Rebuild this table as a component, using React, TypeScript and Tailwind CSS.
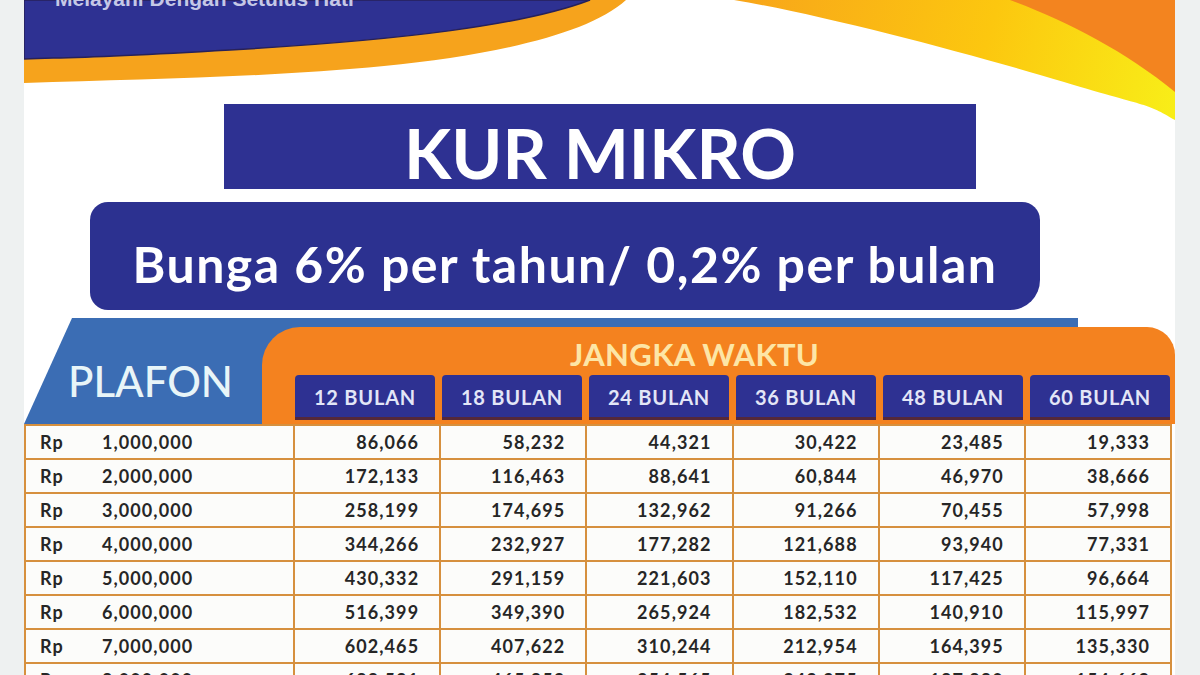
// KUR Mikro brochure: banner swoosh, title blocks, and the instalment table.

const terms = ['12 BULAN', '18 BULAN', '24 BULAN', '36 BULAN', '48 BULAN', '60 BULAN'];

const rows: [string, string[]][] = [
  ['1,000,000', ['86,066', '58,232', '44,321', '30,422', '23,485', '19,333']],
  ['2,000,000', ['172,133', '116,463', '88,641', '60,844', '46,970', '38,666']],
  ['3,000,000', ['258,199', '174,695', '132,962', '91,266', '70,455', '57,998']],
  ['4,000,000', ['344,266', '232,927', '177,282', '121,688', '93,940', '77,331']],
  ['5,000,000', ['430,332', '291,159', '221,603', '152,110', '117,425', '96,664']],
  ['6,000,000', ['516,399', '349,390', '265,924', '182,532', '140,910', '115,997']],
  ['7,000,000', ['602,465', '407,622', '310,244', '212,954', '164,395', '135,330']],
  ['8,000,000', ['688,531', '465,853', '354,565', '243,375', '187,880', '154,662']],
];

function Banner() {
  return (
    <svg
      className="absolute left-0 top-0"
      width="1151"
      height="125"
      viewBox="0 0 1151 125"
      aria-hidden
    >
      <defs>
        <linearGradient id="swoosh" x1="720" y1="0" x2="1151" y2="115" gradientUnits="userSpaceOnUse">
          <stop offset="0" stopColor="#f8a61a" />
          <stop offset="0.55" stopColor="#fcc70f" />
          <stop offset="1" stopColor="#f8ee18" />
        </linearGradient>
      </defs>
      <path d="M0 0H602C565 34 470 55 360 66S120 79 0 83Z" fill="#f6a31c" />
      <path d="M0 0H566C500 25 380 40 206 50S40 57 0 59Z" fill="#2e3192" stroke="#27215a" strokeWidth="1.5" />
      <path d="M710 0C800 15 950 55 1040 82S1120 102 1151 120V0Z" fill="url(#swoosh)" />
      <path d="M986 0C1040 20 1100 50 1151 92V0Z" fill="#f3841f" />
      <text
        x="31"
        y="6"
        fontFamily="Liberation Sans, Arial, sans-serif"
        fontWeight="700"
        fontSize="21"
        fill="#c5c8e6"
      >
        Melayani Dengan Setulus Hati
      </text>
    </svg>
  );
}

function TableHead() {
  return (
    <div className="mt-[8px] flex h-[106px]">
      <div className="flex w-[238px] items-center bg-[#3b6db4] pl-[44px] pt-[20px] text-[42px] font-medium leading-none text-[#e8f5f8] [clip-path:polygon(48px_0,100%_0,100%_100%,0_100%)]">
        PLAFON
      </div>
      <div className="flex-1 bg-[linear-gradient(to_right,#3b6db4_816px,transparent_816px)] pt-[9px]">
        <div className="flex h-full flex-col rounded-tl-[38px] rounded-tr-[28px] bg-[#f4821f]">
          <div className="mt-[12px] pl-[308px] text-[31px] font-bold leading-none tracking-[0.01em] text-[#fde6a6]">
            JANGKA WAKTU
          </div>
          <div className="mt-[5px] grid grid-cols-[31px_repeat(6,1fr)]">
            <div />
            {terms.map((t) => (
              <div
                key={t}
                className="ml-[2px] mr-[5px] flex h-[45px] items-center justify-center rounded-t-[4px] border-b-[3px] border-[#55283a] bg-[#2e3192] pt-[2px] text-[20px] font-bold tracking-[0.04em] text-[#e3e6f7]"
              >
                {t}
              </div>
            ))}
          </div>
        </div>
      </div>
    </div>
  );
}

function Table() {
  return (
    <div className="grid w-[1148px] grid-cols-[269px_repeat(6,1fr)] border-l-2 border-t-2 border-[#d6903e] text-[18px] font-bold tracking-[0.06em] text-[#262626]">
      {rows.map(([plafon, vals]) => (
        <div key={plafon} className="contents">
          <div className="flex h-[34px] items-center border-b-2 border-r-2 border-[#d6903e] bg-[#fcfcfa] pl-[14px]">
            <span className="w-[62px]">Rp</span>
            <span>{plafon}</span>
          </div>
          {vals.map((v, i) => (
            <div
              key={i}
              className="flex h-[34px] items-center justify-end border-b-2 border-r-2 border-[#d6903e] bg-[#fcfcfa] pr-[20px]"
            >
              {v}
            </div>
          ))}
        </div>
      ))}
    </div>
  );
}

export default function App() {
  return (
    <div className="flex h-[675px] w-[1200px] overflow-hidden bg-[#eef1f1] pl-[24px] font-['Lato',sans-serif]">
      <div className="relative h-[675px] w-[1151px] overflow-hidden bg-white">
        <Banner />
        <div className="relative pt-[104px]">
          <div className="ml-[200px] flex h-[85px] w-[752px] items-center justify-center bg-[#2e3192] pt-[11px] text-[69px] font-bold leading-none text-white">
            KUR MIKRO
          </div>
          <div className="ml-[66px] mt-[13px] flex h-[108px] w-[950px] items-center justify-center rounded-[18px] rounded-br-[30px] bg-[#2c3190] pt-[16px] text-[50px] font-bold leading-none tracking-[0.03em] text-white">
            Bunga 6% per tahun/ 0,2% per bulan
          </div>
          <TableHead />
          <Table />
        </div>
      </div>
    </div>
  );
}
